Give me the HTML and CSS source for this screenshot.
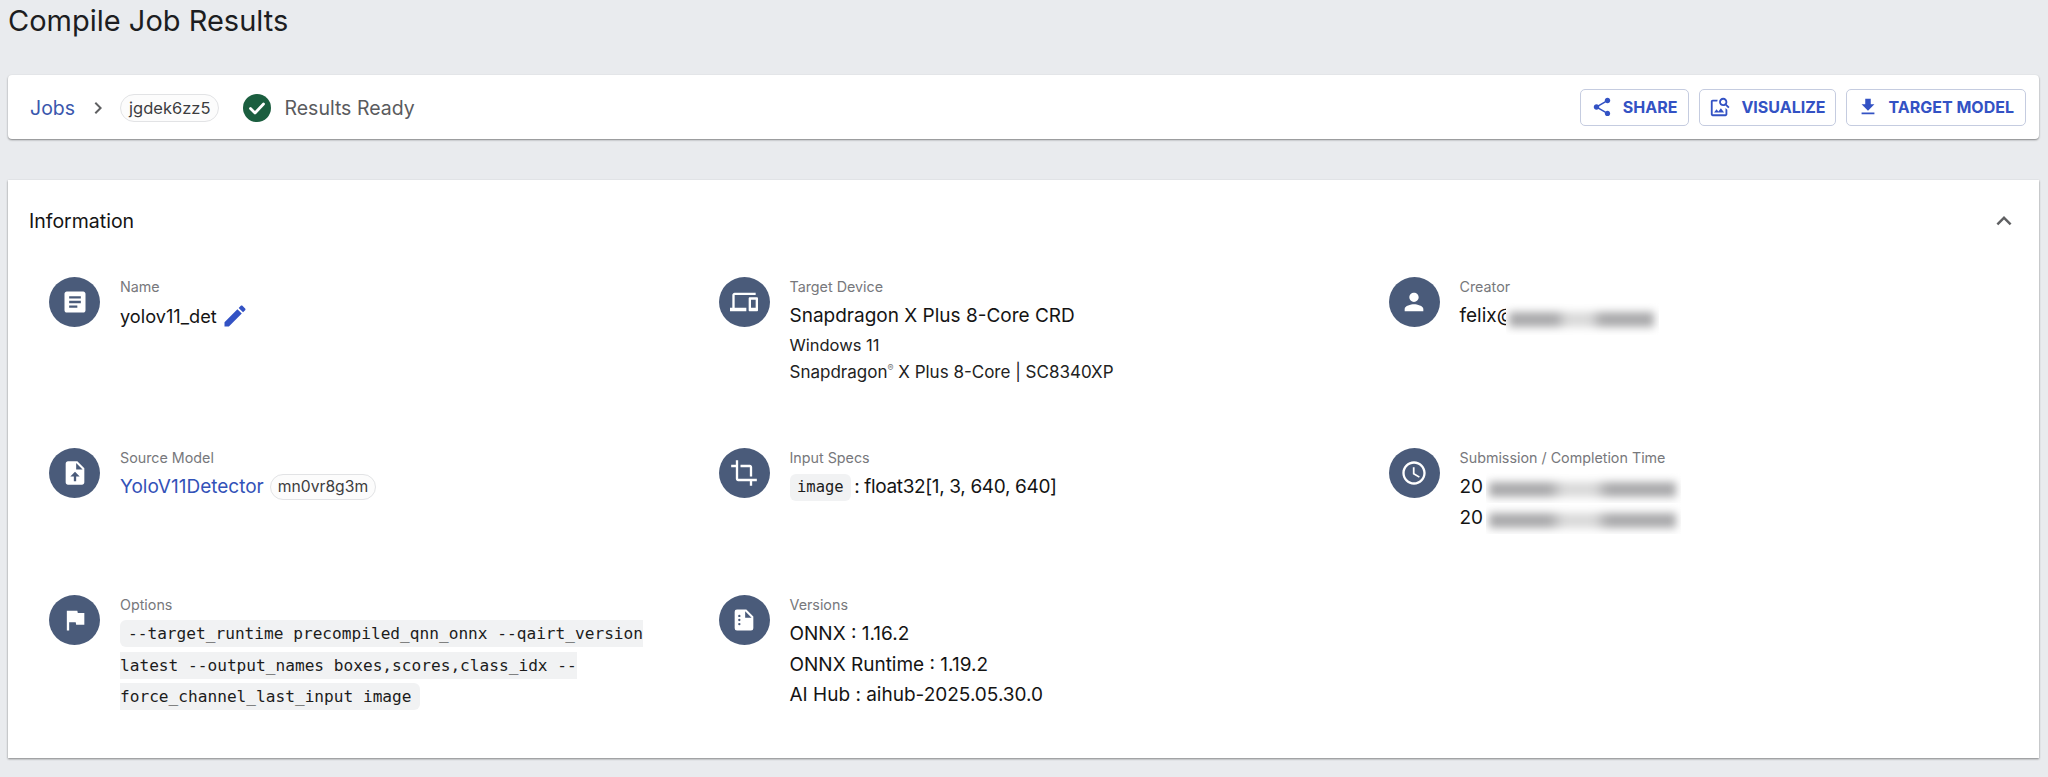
FILE: index.html
```html
<!DOCTYPE html>
<html lang="en">
<head>
<meta charset="utf-8">
<title>Compile Job Results</title>
<link rel="stylesheet" href="styles.css">
</head>
<body>
<main class="page">
  <h1 class="title">Compile Job Results</h1>

  <section class="toolbar">
    <nav class="crumbs">
      <a class="crumb-link">Jobs</a>
      <svg class="crumb-sep" viewBox="0 0 24 24"><path d="M10 6L8.59 7.41 13.17 12l-4.58 4.59L10 18l6-6z"/></svg>
      <span class="chip chip-job">jgdek6zz5</span>
      <svg class="status-icon" viewBox="0 0 28 28"><circle cx="14" cy="14" r="14" fill="#1b5e3f"/><path d="M7.5 14.5l4.5 4.5 8.5-9" fill="none" stroke="#fff" stroke-width="2.8" stroke-linecap="round" stroke-linejoin="round"/></svg>
      <span class="status-text">Results Ready</span>
    </nav>
    <div class="actions">
      <button class="btn btn-share"><svg viewBox="0 0 24 24"><path d="M18 16.08c-.76 0-1.44.3-1.96.77L8.91 12.7c.05-.23.09-.46.09-.7s-.04-.47-.09-.7l7.05-4.11c.54.5 1.25.81 2.04.81 1.66 0 3-1.34 3-3s-1.34-3-3-3-3 1.34-3 3c0 .24.04.47.09.7L8.04 9.81C7.5 9.31 6.79 9 6 9c-1.66 0-3 1.34-3 3s1.34 3 3 3c.79 0 1.5-.31 2.04-.81l7.12 4.16c-.05.21-.08.43-.08.65 0 1.61 1.31 2.92 2.92 2.92 1.61 0 2.92-1.31 2.92-2.92s-1.31-2.92-2.92-2.92z"/></svg>SHARE</button>
      <button class="btn btn-vis"><svg viewBox="0 0 24 24"><path d="M18 13v7H4V6h5.02c.05-.71.22-1.38.48-2H4c-1.1 0-2 .9-2 2v14c0 1.1.9 2 2 2h14c1.1 0 2-.9 2-2v-5l-2-2zm-1.5 5h-11l2.75-3.53 1.96 2.36 2.75-3.54zm2.8-9.11c.44-.7.7-1.51.7-2.39C20 4.01 17.99 2 15.5 2S11 4.01 11 6.5s2.01 4.5 4.49 4.5c.88 0 1.7-.26 2.39-.7L21 13.42 22.42 12 19.3 8.89zM15.5 9C14.12 9 13 7.88 13 6.5S14.12 4 15.5 4 18 5.12 18 6.5 16.88 9 15.5 9z"/></svg>VISUALIZE</button>
      <button class="btn btn-model"><svg viewBox="0 0 24 24"><path d="M5 20h14v-2H5v2zM19 9h-4V3H9v6H5l7 7 7-7z"/></svg>TARGET MODEL</button>
    </div>
  </section>

  <section class="card">
    <header class="card-head">
      <h2 class="card-title">Information</h2>
      <svg class="collapse" viewBox="0 0 24 24"><path d="M12 8l-6 6 1.41 1.41L12 10.83l4.59 4.58L18 14z"/></svg>
    </header>
    <div class="grid">
      <div class="item">
        <span class="badge"><svg viewBox="0 0 24 24"><path d="M19 3H5c-1.1 0-2 .9-2 2v14c0 1.1.9 2 2 2h14c1.1 0 2-.9 2-2V5c0-1.1-.9-2-2-2zm-5 14H7v-2h7v2zm3-4H7v-2h10v2zm0-4H7V7h10v2z"/></svg></span>
        <div class="body">
          <div class="label">Name</div>
          <div class="value value-name">yolov11_det<svg class="edit" viewBox="0 0 24 24"><path d="M3 17.25V21h3.75L17.81 9.94l-3.75-3.75L3 17.25zM20.71 7.04c.39-.39.39-1.02 0-1.41l-2.34-2.34c-.39-.39-1.02-.39-1.41 0l-1.83 1.83 3.75 3.75 1.83-1.83z"/></svg></div>
        </div>
      </div>

      <div class="item">
        <span class="badge"><svg viewBox="0 0 24 24"><path d="M4 6h18V4H4c-1.1 0-2 .9-2 2v11H0v3h14v-3H4V6zm19 2h-6c-.55 0-1 .45-1 1v10c0 .55.45 1 1 1h6c.55 0 1-.45 1-1V9c0-.55-.45-1-1-1zm-1 9h-4v-7h4v7z"/></svg></span>
        <div class="body">
          <div class="label">Target Device</div>
          <div class="value">Snapdragon X Plus 8-Core CRD</div>
          <div class="sub sub-os">Windows 11</div>
          <div class="sub sub-chip">Snapdragon<sup class="reg">®</sup> X Plus 8-Core | SC8340XP</div>
        </div>
      </div>

      <div class="item">
        <span class="badge"><svg viewBox="0 0 24 24"><path d="M12 12c2.21 0 4-1.79 4-4s-1.79-4-4-4-4 1.79-4 4 1.79 4 4 4zm0 2c-2.67 0-8 1.34-8 4v2h16v-2c0-2.66-5.33-4-8-4z"/></svg></span>
        <div class="body">
          <div class="label">Creator</div>
          <div class="value has-mask">felix@<span class="mask mask-mail"><i class="smear"></i></span></div>
        </div>
      </div>

      <div class="item">
        <span class="badge"><svg viewBox="0 0 24 24"><path fill-rule="evenodd" d="M14 2H6C4.9 2 4.01 2.9 4.01 4L4 20c0 1.1.89 2 1.99 2H18c1.1 0 2-.9 2-2V8l-6-6zM13 15v4h-2v-4H8l4.01-4L16 15h-3zM13 9V3.5L18.5 9H13z"/></svg></span>
        <div class="body">
          <div class="label">Source Model</div>
          <div class="value value-link"><a class="model-link">YoloV11Detector</a><span class="chip chip-model">mn0vr8g3m</span></div>
        </div>
      </div>

      <div class="item">
        <span class="badge"><svg viewBox="0 0 24 24"><path d="M17 15h2V7c0-1.1-.9-2-2-2H9v2h8v8zM7 17V1H5v4H1v2h4v10c0 1.1.9 2 2 2h10v4h2v-4h4v-2H7z"/></svg></span>
        <div class="body">
          <div class="label">Input Specs</div>
          <div class="value value-link"><code class="code code-spec">image</code><span class="spec-text">: float32[1, 3, 640, 640]</span></div>
        </div>
      </div>

      <div class="item">
        <span class="badge"><svg viewBox="0 0 24 24"><path d="M11.99 2C6.47 2 2 6.48 2 12s4.47 10 9.99 10C17.52 22 22 17.52 22 12S17.52 2 11.99 2zM12 20c-4.42 0-8-3.58-8-8s3.58-8 8-8 8 3.58 8 8-3.58 8-8 8zm.5-13H11v6l5.25 3.15.75-1.23-4.5-2.67z"/></svg></span>
        <div class="body">
          <div class="label">Submission / Completion Time</div>
          <div class="value value-time has-mask">20<span class="mask mask-time"><i class="smear"></i></span></div>
          <div class="value value-time has-mask">20<span class="mask mask-time"><i class="smear"></i></span></div>
        </div>
      </div>

      <div class="item">
        <span class="badge"><svg viewBox="0 0 24 24"><path d="M14.4 6L14 4H5v17h2v-7h5.6l.4 2h7V6z"/></svg></span>
        <div class="body body-options">
          <div class="label">Options</div>
          <div class="options"><code class="code code-options">--target_runtime precompiled_qnn_onnx --qairt_version latest --output_names boxes,scores,class_idx --force_channel_last_input image</code></div>
        </div>
      </div>

      <div class="item">
        <span class="badge"><svg viewBox="0 0 24 24"><path fill-rule="evenodd" d="M6 3h8l6 6v10a2 2 0 0 1-2 2H6a2 2 0 0 1-2-2V5a2 2 0 0 1 2-2zM13 4.500V10h5.500zM8 7.500a1 1 0 1 0 0 2 1 1 0 0 0 0-2zM8 11a1 1 0 1 0 0 2 1 1 0 0 0 0-2zM8 14.500a1 1 0 1 0 0 2 1 1 0 0 0 0-2z"/></svg></span>
        <div class="body">
          <div class="label">Versions</div>
          <div class="value value-ver">ONNX : 1.16.2</div>
          <div class="value value-ver">ONNX Runtime : 1.19.2</div>
          <div class="value value-ver">AI Hub : aihub-2025.05.30.0</div>
        </div>
      </div>
    </div>
  </section>
</main>
</body>
</html>
```
FILE: styles.css
```css
* { box-sizing: border-box; }
html, body { margin: 0; padding: 0; }
body {
  background: #e9ebee;
  color: #141414;
  font-family: "Inter", "Liberation Sans", sans-serif;
}
.page { padding: 0 9px 19px 8px; height: 777px; overflow: hidden; }
.title {
  margin: 0;
  height: 75px;
  font-size: 29px;
  line-height: 42px;
  font-weight: 400;
  color: #1c1d21;
}
.toolbar {
  height: 64px;
  display: flex;
  align-items: center;
  justify-content: space-between;
  padding: 0 13px 0 22px;
  background: #fff;
  border-radius: 4px;
  box-shadow: 0 1px 2px rgba(0,0,0,.45);
}
.crumbs { display: flex; align-items: center; padding-top: 2px; }
.crumb-link { font-size: 19.5px; color: #3a57ad; }
.crumb-sep { width: 24px; height: 24px; margin-left: 11px; fill: #5f6062; }
.chip {
  display: inline-flex;
  align-items: center;
  border: 1px solid #e2e3e5;
  border-radius: 14px;
  color: #3c3d40;
  background: #fcfcfc;
}
.chip-job { height: 28px; margin-left: 10px; padding: 0 8px; font-size: 16.5px; }
.status-icon { width: 28px; height: 28px; margin-left: 24px; }
.status-text { margin-left: 13px; font-size: 19.5px; color: #5a5b5e; }
.actions { display: flex; align-items: center; gap: 10px; }
.btn {
  display: flex;
  align-items: center;
  height: 37px;
  padding: 0 11px 0 10px;
  border: 1px solid #c5cce0;
  border-radius: 5px;
  background: #fff;
  color: #3352c4;
  font-family: "Inter", "Liberation Sans", sans-serif;
  font-size: 16px;
  font-weight: 700;
}
.btn-vis { padding: 0 9px 0 9px; }
.btn svg { width: 22px; height: 22px; margin-right: 10px; fill: #3352c4; }
.card {
  height: 578px;
  margin-top: 41px;
  background: #fff;
  box-shadow: 0 1px 2px rgba(0,0,0,.45);
}
.card-head {
  display: flex;
  align-items: center;
  justify-content: space-between;
  height: 82px;
  padding: 0 20px 0 21px;
}
.card-title { margin: 0; font-size: 19.5px; font-weight: 400; color: #141414; }
.collapse { width: 30px; height: 30px; fill: #5f6062; }
.grid {
  display: grid;
  grid-template-columns: 669.5px 670px 1fr;
  grid-template-rows: 171px 147px auto;
  margin-top: 15px;
  padding-left: 41px;
}
.item { display: flex; align-items: flex-start; }
.badge {
  flex: none;
  display: flex;
  align-items: center;
  justify-content: center;
  width: 51px;
  height: 50px;
  border-radius: 50%;
  background: #4a5b7a;
}
.badge svg { width: 28px; height: 28px; fill: #fff; }
.body { margin-left: 20px; }
.body-options { width: 535px; }
.label { font-size: 14.3px; line-height: 19px; color: #77787c; }
.value { margin-top: 6px; font-size: 19px; line-height: 28px; color: #141414; }
.value-name { display: flex; align-items: center; font-size: 18.2px; }
.edit { width: 28px; height: 28px; margin-left: 4px; fill: #3352c4; }
.value-link { display: flex; align-items: center; height: 28px; }
.model-link { color: #3352b8; }
.chip-model { height: 26px; margin-left: 6px; padding: 0 7px; font-size: 15.7px; }
.sub-os { margin-top: 1px; font-size: 16.5px; line-height: 28px; color: #222; }
.sub-chip { font-size: 17px; line-height: 27px; color: #222; }
.reg { font-size: 9px; line-height: 0; color: #777; }
.code {
  font-family: "DejaVu Sans Mono", "Liberation Mono", monospace;
  background: #f1f2f3;
  color: #1c1c1c;
  border-radius: 6px;
}
.code-spec { display: block; height: 27px; padding: 0 7.5px; font-size: 15.5px; line-height: 27px; }
.spec-text { margin-left: 3px; font-size: 19px; letter-spacing: -.35px; }
.options { margin-top: 4px; line-height: 30.7px; }
.code-options { padding: 4px 8px; font-size: 16.15px; }
.value-ver { margin-top: 2px; line-height: 28.5px; }
.value-ver:nth-child(2) { margin-top: 6px; }
.value-time + .value-time { margin-top: 3px; }
.has-mask { position: relative; }
.mask {
  position: absolute;
  top: 0;
  overflow: hidden;
  background: #fff;
}
.mask-mail { left: 46px; top: 1px; width: 153px; height: 32px; }
.mask-time { left: 26px; width: 195px; height: 30px; }
.smear {
  position: absolute;
  left: 3px;
  right: 5px;
  top: 9px;
  height: 15px;
  background: linear-gradient(90deg, #a9a9ab 0 32%, #d9d9d9 40% 56%, #a9a9ab 64%);
  filter: blur(4px);
}
```
